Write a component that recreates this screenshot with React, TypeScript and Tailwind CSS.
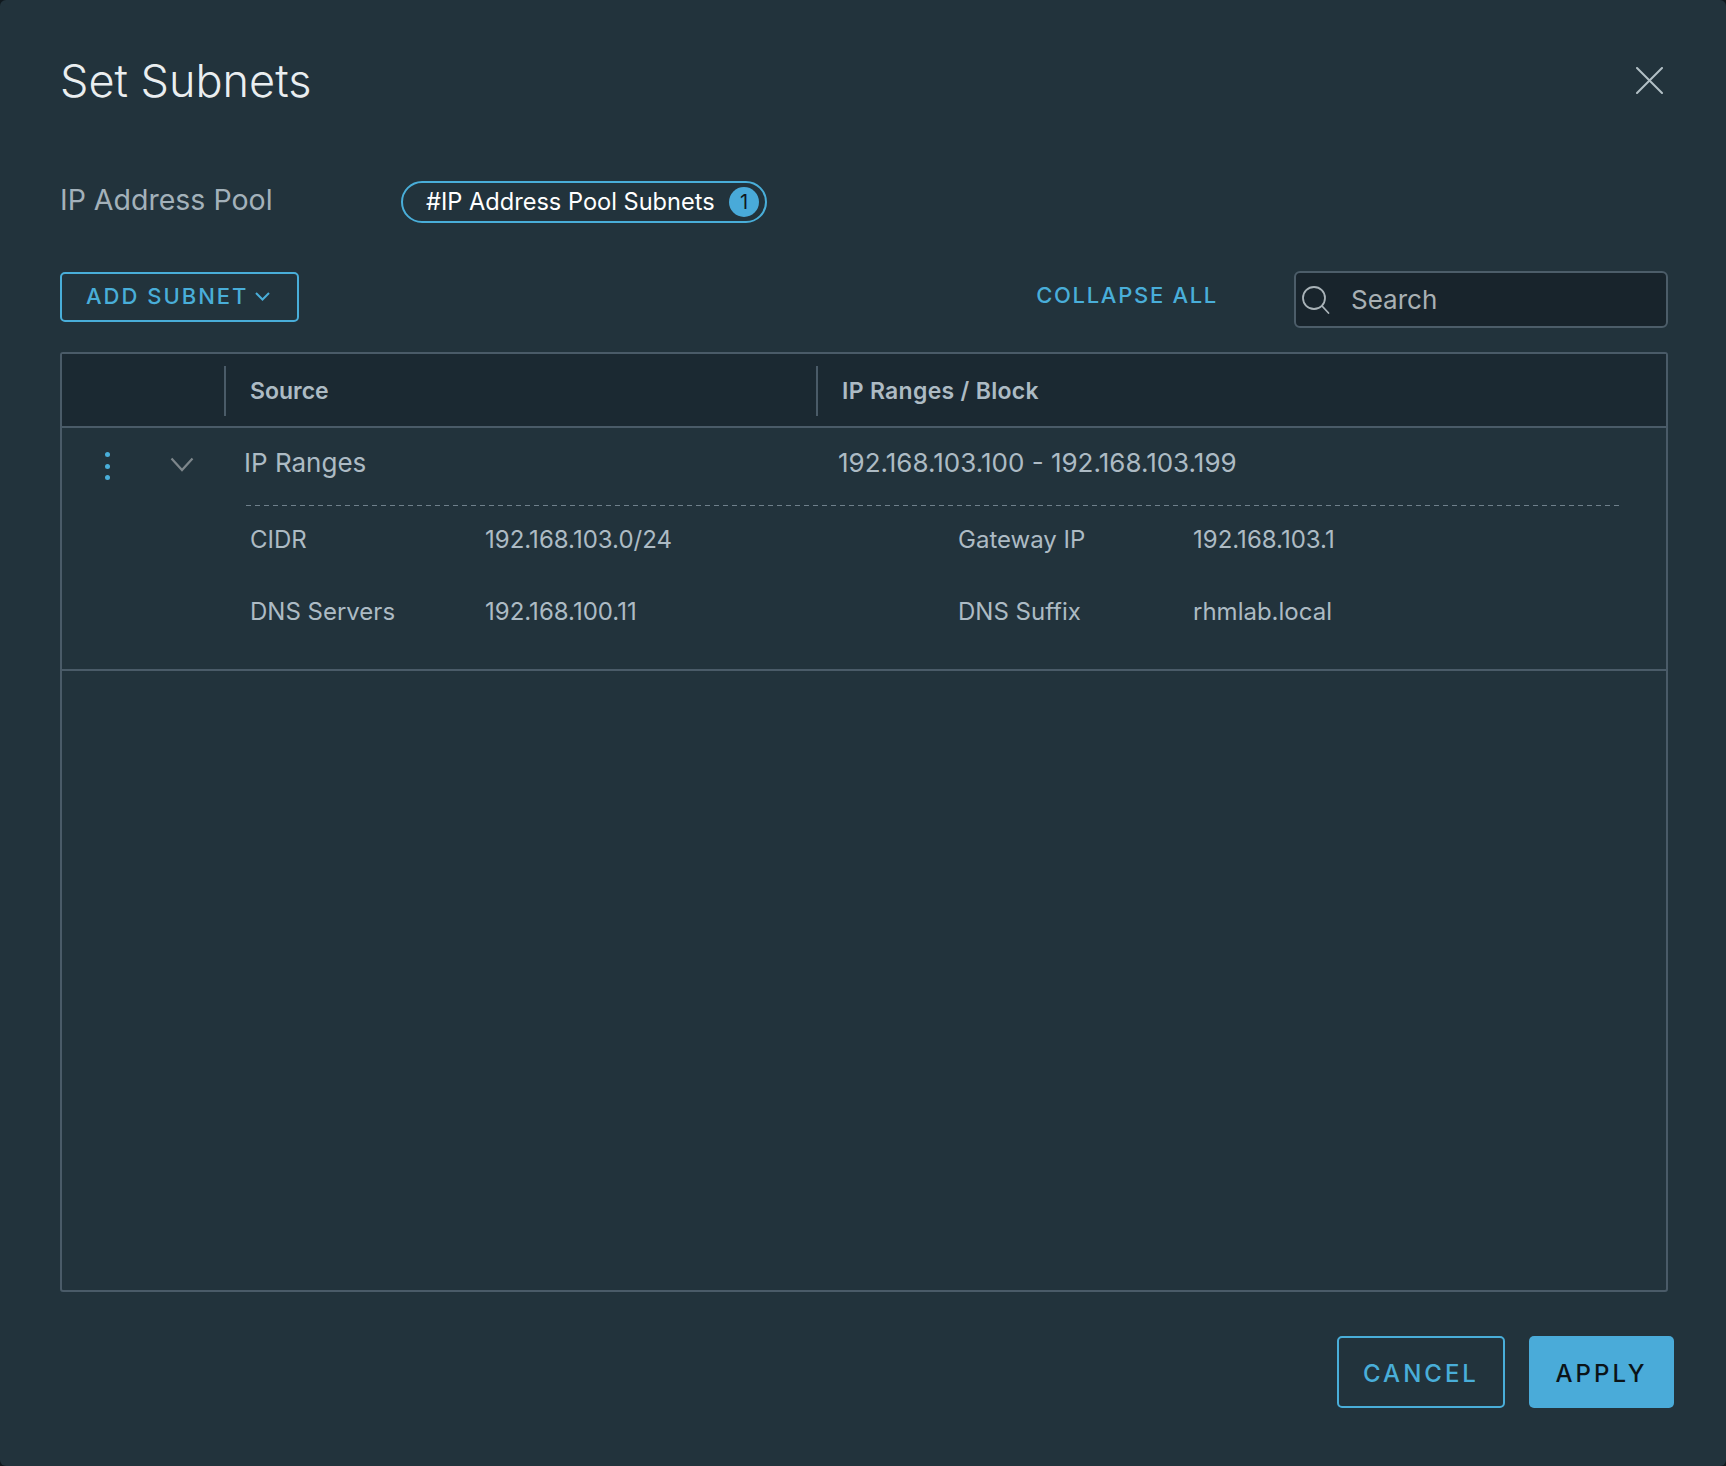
import React from "react"

const DetailRow = ({ label, value, label2, value2 }: { label: string; value: string; label2: string; value2: string }) => (
  <div className="flex h-[72px] items-center pl-[188px] text-[24px] text-[#adbbc4]">
    <span className="w-[235px]">{label}</span>
    <span className="w-[473px]">{value}</span>
    <span className="w-[235px]">{label2}</span>
    <span>{value2}</span>
  </div>
)

export default function App() {
  return (
    <div className="h-[1466px] w-[1726px] bg-[#10191e] font-['Inter',sans-serif]">
      <div className="flex h-full w-full flex-col rounded-[6px] bg-[#22333c]">
        <div className="flex items-center justify-between pl-[60px] pr-[63px] pt-[54px]">
          <h1 className="text-[45px] font-light leading-[54px] text-[#eaeef0]">Set Subnets</h1>
          <svg className="mb-[1px]" width="27" height="27" viewBox="0 0 27 27" fill="none" stroke="#b3c0c6" strokeWidth="2" strokeLinecap="round">
            <path d="M1 1l25 25M26 1L1 26" />
          </svg>
        </div>

        <div className="mt-[73px] flex items-center pl-[60px]">
          <span className="mb-[5px] w-[341px] text-[28.5px] leading-[36px] text-[#a3b1ba]">IP Address Pool</span>
          <div className="flex h-[42px] w-[366px] items-center justify-between rounded-full border-2 border-[#49aed9] pl-[23px] pr-[6px] text-[23.6px] text-white">
            <span>#IP Address Pool Subnets</span>
            <span className="flex h-[30px] w-[30px] items-center justify-center rounded-full bg-[#49aad9] text-[20px] text-[#10191e]">1</span>
          </div>
        </div>

        <div className="mt-[48px] flex items-start pl-[60px] pr-[58px]">
          <button className="mt-[1px] flex h-[50px] w-[239px] items-center rounded-[5px] border-2 border-[#49aed9] pb-[2px] pl-[24px] text-[22px] font-medium tracking-[2px] text-[#49aed9]">
            ADD SUBNET
            <svg className="ml-[7px]" width="15" height="9" viewBox="0 0 15 9" fill="none" stroke="#49aed9" strokeWidth="2">
              <path d="M1 1l6.5 6.5L14 1" />
            </svg>
          </button>
          <button className="ml-auto mt-[8px] text-[22px] font-medium tracking-[1.7px] text-[#49aed9]">COLLAPSE ALL</button>
          <div className="ml-[76px] flex h-[57px] w-[374px] items-center rounded-[6px] border-2 border-[#4c5d69] bg-[#18242c] pl-[5px]">
            <svg width="30" height="30" viewBox="0 0 30 30" fill="none" stroke="#a9b3b8" strokeWidth="1.8" strokeLinecap="round">
              <circle cx="13" cy="13" r="11" />
              <path d="M21.5 21.5l6 6.5" />
            </svg>
            <span className="ml-[20px] text-[26px] text-[#a8b0b4]">Search</span>
          </div>
        </div>

        <div className="ml-[60px] mt-[24px] h-[940px] w-[1608px] rounded-[3px] border-2 border-[#4a5b68]">
          <div className="flex h-[72px] items-center bg-[#1b2932] pt-[2px] text-[23px] font-semibold text-[#adbbc4]">
            <div className="w-[162px]" />
            <div className="flex h-[50px] w-[592px] items-center border-l-2 border-[#4a5b68] pl-[24px]">Source</div>
            <div className="flex h-[50px] items-center border-l-2 border-[#4a5b68] pl-[24px] tracking-[0.3px]">IP Ranges / Block</div>
          </div>

          <div className="border-t-2 border-b-2 border-[#4a5b68] pb-[21px]">
            <div className="flex h-[77px] pt-[17px] text-[26px] leading-[36px] text-[#adbbc4]">
              <div className="flex w-[182px] items-start pl-[43px]">
                <div className="mt-[7px] flex flex-col gap-[6.5px]">
                  <span className="h-[5px] w-[5px] rounded-full bg-[#49aed9]" />
                  <span className="h-[5px] w-[5px] rounded-full bg-[#49aed9]" />
                  <span className="h-[5px] w-[5px] rounded-full bg-[#49aed9]" />
                </div>
                <svg className="ml-[60px] mt-[12px]" width="24" height="15" viewBox="0 0 24 15" fill="none" stroke="#7d868b" strokeWidth="2.2">
                  <path d="M1.5 1.5L12 13 22.5 1.5" />
                </svg>
              </div>
              <span className="w-[594px]">IP Ranges</span>
              <span>192.168.103.100 - 192.168.103.199</span>
            </div>
            <div className="ml-[184px] mr-[43px] h-px bg-[repeating-linear-gradient(90deg,#6f808b_0_5px,transparent_5px_9px)]" />
            <div className="-mt-[2px]">
              <DetailRow label="CIDR" value="192.168.103.0/24" label2="Gateway IP" value2="192.168.103.1" />
              <DetailRow label="DNS Servers" value="192.168.100.11" label2="DNS Suffix" value2="rhmlab.local" />
            </div>
          </div>
        </div>

        <div className="mt-[44px] flex justify-end gap-[24px] pr-[52px]">
          <button className="h-[72px] w-[168px] rounded-[5px] border-2 border-[#49aed9] pt-[3px] text-[24px] font-medium tracking-[3px] text-[#49aed9]">CANCEL</button>
          <button className="h-[72px] w-[145px] rounded-[5px] bg-[#4aabd9] pt-[3px] text-[24px] font-medium tracking-[3px] text-[#0b1418]">APPLY</button>
        </div>
      </div>
    </div>
  )
}
